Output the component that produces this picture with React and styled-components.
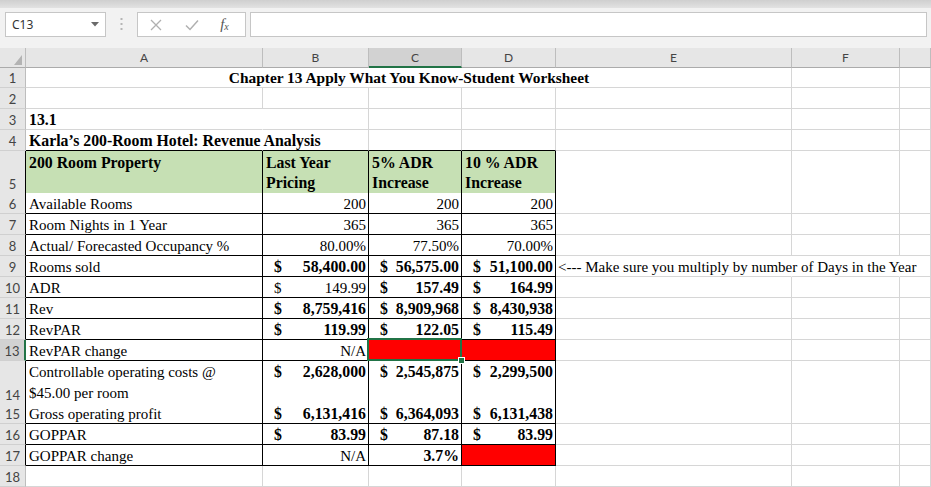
import React from "react";
import styled, { createGlobalStyle } from "styled-components";

const COLS = "26px 237px 106px 93px 94px 236px 108px 1fr";
const GRID = "#d6d6d6";
const GREEN = "#217346";
const HEAD_BG = "#e6e6e6";

const GlobalStyle = createGlobalStyle`
  html, body { margin: 0; padding: 0; background: #fff; overflow: hidden; }
  * { box-sizing: border-box; }
`;

const Window = styled.div`
  width: 931px;
  height: 487px;
  overflow: hidden;
  display: flex;
  flex-direction: column;
  font-family: "Liberation Serif", "Times New Roman", serif;
`;

const TopStrip = styled.div`
  height: 8px;
  background: linear-gradient(#cfcfcf, #e2e2e2);
`;

/* formula bar: name box, dots, x / check / fx, input */
const FormulaBar = styled.div`
  height: 40px;
  background: #f2f2f2;
  display: flex;
  align-items: flex-start;
  padding: 4px 4px 0 5px;
`;

const NameBox = styled.div`
  width: 101px;
  height: 25px;
  background: #fff;
  border: 1px solid #c6c6c6;
  display: flex;
  align-items: center;
  justify-content: space-between;
  padding: 0 6px 0 6px;
  font-family: "Noto Sans", "Open Sans", sans-serif;
  font-size: 12px;
  color: #333;
`;

const Dots = styled.div`
  width: 31px;
  height: 25px;
  display: flex;
  align-items: center;
  justify-content: center;
`;

const FxBox = styled.div`
  width: 109px;
  height: 25px;
  background: #fff;
  border: 1px solid #c6c6c6;
  display: grid;
  grid-template-columns: 36px 36px 1fr;
  align-items: center;
  justify-items: center;
  margin-right: 4px;
`;

const Fx = styled.span`
  font-family: "Liberation Serif", serif;
  font-style: italic;
  font-size: 15px;
  color: #555;
  margin-left: -6px;
  sub { font-size: 10px; vertical-align: -1px; }
`;

const Input = styled.div`
  flex: 1;
  height: 25px;
  background: #fff;
  border: 1px solid #c6c6c6;
`;

/* sheet */
const Row = styled.div`
  display: grid;
  grid-template-columns: ${COLS};
  height: ${({ $h }) => $h || 21}px;
`;

const Corner = styled.div`
  background: ${HEAD_BG};
  border-right: 1px solid #bdbdbd;
  border-bottom: 1px solid #ababab;
  display: flex;
  align-items: flex-end;
  justify-content: flex-end;
  padding: 0 3px 2px 0;
`;

const ColHead = styled.div`
  background: ${({ $sel }) => ($sel ? "#d2d2d2" : HEAD_BG)};
  border-right: 1px solid #bdbdbd;
  border-bottom: ${({ $sel }) => ($sel ? `2px solid ${GREEN}` : "1px solid #ababab")};
  display: flex;
  align-items: center;
  justify-content: center;
  font-family: "Lato", "Liberation Sans", sans-serif;
  font-size: 12px;
  color: #444;
`;

const RowHead = styled.div`
  background: ${({ $sel }) => ($sel ? "#d2d2d2" : HEAD_BG)};
  border-right: ${({ $sel, $edge }) =>
    $sel ? `2px solid ${GREEN}` : `1px solid ${$edge ? "#000" : "#bdbdbd"}`};
  border-bottom: 1px solid #d0d0d0;
  display: flex;
  align-items: flex-end;
  justify-content: center;
  font-family: "Lato", "Liberation Sans", sans-serif;
  font-size: 13px;
  line-height: 17px;
  color: #444;
`;

const Cell = styled.div`
  position: relative;
  grid-column: span ${({ $span }) => $span || 1};
  display: flex;
  align-items: ${({ $top }) => ($top ? "flex-start" : "flex-end")};
  justify-content: ${({ $justify }) => $justify || "flex-start"};
  padding: ${({ $pad }) => $pad || "0 2px 0 3px"};
  padding-top: ${({ $top }) => ($top ? "2px" : "0")};
  background: ${({ $bg }) => $bg || "#fff"};
  border-right: 1px solid ${({ $r }) => $r || GRID};
  border-bottom: 1px solid ${({ $b }) => $b || GRID};
  font-size: ${({ $bold }) => ($bold ? "15.8px" : "15px")};
  line-height: 18px;
  font-weight: ${({ $bold }) => ($bold ? 700 : 400)};
  white-space: nowrap;
  color: #000;
  z-index: ${({ $z }) => $z || "auto"};
`;

const Title = styled.span`
  font-size: 15.4px;
  font-weight: 700;
`;

const Selection = styled.div`
  position: absolute;
  top: -2px;
  left: -2px;
  right: -1px;
  bottom: -1px;
  border: 2px solid ${GREEN};
  pointer-events: none;
`;

const Handle = styled.span`
  position: absolute;
  right: -5px;
  bottom: -5px;
  width: 7px;
  height: 7px;
  background: ${GREEN};
  border: 1px solid #fff;
`;

const Dollar = styled.span``;
const Amount = styled.span``;

const Wrapped = styled.span`
  white-space: normal;
  line-height: ${({ $lh }) => $lh || 20}px;
  margin-top: ${({ $mt }) => $mt || 0}px;
`;

const n = (v, bold) => ({ v, bold });
const c = (v, bold) => ({ v, bold, cur: true });
const RED = { red: true };

const body = [
  { n: 6, label: "Available Rooms", vals: [n("200"), n("200"), n("200")] },
  { n: 7, label: "Room Nights in 1 Year", vals: [n("365"), n("365"), n("365")] },
  { n: 8, label: "Actual/ Forecasted Occupancy %", vals: [n("80.00%"), n("77.50%"), n("70.00%")] },
  {
    n: 9,
    label: "Rooms sold",
    vals: [c("58,400.00", 1), c("56,575.00", 1), c("51,100.00", 1)],
    note: "<--- Make sure you multiply by number of Days in the Year",
  },
  { n: 10, label: "ADR", vals: [c("149.99"), c("157.49", 1), c("164.99", 1)] },
  { n: 11, label: "Rev", vals: [c("8,759,416", 1), c("8,909,968", 1), c("8,430,938", 1)] },
  { n: 12, label: "RevPAR", vals: [c("119.99", 1), c("122.05", 1), c("115.49", 1)] },
  { n: 13, label: "RevPAR change", vals: [n("N/A"), { red: true, sel: true }, RED], sel: true },
  {
    n: 14,
    h: 42,
    top: true,
    label: (
      <Wrapped $lh={21} $mt={-1}>
        Controllable operating costs @<br />$45.00 per room
      </Wrapped>
    ),
    vals: [c("2,628,000", 1), c("2,545,875", 1), c("2,299,500", 1)],
  },
  { n: 15, label: "Gross operating profit", vals: [c("6,131,416", 1), c("6,364,093", 1), c("6,131,438", 1)] },
  { n: 16, label: "GOPPAR", vals: [c("83.99", 1), c("87.18", 1), c("83.99", 1)] },
  { n: 17, label: "GOPPAR change", vals: [n("N/A"), n("3.7%", 1), RED] },
];

function ValueCell({ d, top }) {
  if (d.red) {
    return (
      <Cell $r="#000" $b="#000" $bg="#ff0000" $z={d.sel ? 2 : "auto"}>
        {d.sel && (
          <Selection>
            <Handle />
          </Selection>
        )}
      </Cell>
    );
  }
  if (d.cur) {
    return (
      <Cell $r="#000" $b="#000" $bold={d.bold} $top={top} $justify="space-between" $pad="0 2px 0 11px">
        <Dollar>$</Dollar>
        <Amount>{d.v}</Amount>
      </Cell>
    );
  }
  return (
    <Cell $r="#000" $b="#000" $bold={d.bold} $top={top} $justify="flex-end">
      {d.v}
    </Cell>
  );
}

function Triangle() {
  return (
    <svg width="8" height="10" viewBox="0 0 8 10">
      <polygon points="8,0 8,10 0,10" fill="#b3b3b3" />
    </svg>
  );
}

export default function App() {
  return (
    <Window>
      <GlobalStyle />
      <TopStrip />
      <FormulaBar>
        <NameBox>
          <span>C13</span>
          <svg width="8" height="5" viewBox="0 0 8 5">
            <polygon points="0,0 8,0 4,4.5" fill="#6a6a6a" />
          </svg>
        </NameBox>
        <Dots>
          <svg width="3" height="13" viewBox="0 0 3 13">
            <rect x="0.5" y="0" width="2" height="2" fill="#b5b5b5" />
            <rect x="0.5" y="5" width="2" height="2" fill="#b5b5b5" />
            <rect x="0.5" y="10" width="2" height="2" fill="#b5b5b5" />
          </svg>
        </Dots>
        <FxBox>
          <svg width="12" height="12" viewBox="0 0 12 12">
            <path d="M1 1 L11 11 M11 1 L1 11" stroke="#b0b0b0" strokeWidth="1.3" fill="none" />
          </svg>
          <svg width="14" height="12" viewBox="0 0 14 12">
            <path d="M1 6.5 L5 10.5 L13 1.5" stroke="#b0b0b0" strokeWidth="1.5" fill="none" />
          </svg>
          <Fx>
            f<sub>x</sub>
          </Fx>
        </FxBox>
        <Input />
      </FormulaBar>

      <Row $h={20}>
        <Corner>
          <Triangle />
        </Corner>
        <ColHead>A</ColHead>
        <ColHead>B</ColHead>
        <ColHead $sel>C</ColHead>
        <ColHead>D</ColHead>
        <ColHead>E</ColHead>
        <ColHead>F</ColHead>
        <ColHead />
      </Row>

      <Row $h={20}>
        <RowHead>1</RowHead>
        <Cell $span={5} $justify="center">
          <Title>Chapter 13 Apply What You Know-Student Worksheet</Title>
        </Cell>
        <Cell />
        <Cell />
      </Row>

      <Row>
        <RowHead>2</RowHead>
        <Cell />
        <Cell />
        <Cell />
        <Cell />
        <Cell />
        <Cell />
        <Cell />
      </Row>

      <Row>
        <RowHead>3</RowHead>
        <Cell $bold $r="#fff">
          13.1
        </Cell>
        <Cell />
        <Cell />
        <Cell />
        <Cell />
        <Cell />
        <Cell />
      </Row>

      <Row>
        <RowHead>4</RowHead>
        <Cell $bold $r="#fff" $b="#000" $z={1}>
          Karla’s 200-Room Hotel: Revenue Analysis
        </Cell>
        <Cell $b="#000" />
        <Cell $b="#000" />
        <Cell $b="#000" />
        <Cell />
        <Cell />
        <Cell />
      </Row>

      <Row $h={42}>
        <RowHead $edge>5</RowHead>
        <Cell $bold $top $bg="#c6e0b4" $r="#000" $b="#000">
          <Wrapped>200 Room Property</Wrapped>
        </Cell>
        <Cell $bold $top $bg="#c6e0b4" $r="#000" $b="#000">
          <Wrapped>
            Last Year
            <br />
            Pricing
          </Wrapped>
        </Cell>
        <Cell $bold $top $bg="#c6e0b4" $r="#000" $b="#000">
          <Wrapped>
            5% ADR
            <br />
            Increase
          </Wrapped>
        </Cell>
        <Cell $bold $top $bg="#c6e0b4" $r="#000" $b="#000">
          <Wrapped>
            10 % ADR
            <br />
            Increase
          </Wrapped>
        </Cell>
        <Cell />
        <Cell />
        <Cell />
      </Row>

      {body.map((row) => (
        <Row key={row.n} $h={row.h}>
          <RowHead $edge $sel={row.sel}>
            {row.n}
          </RowHead>
          <Cell $r="#000" $b="#000" $top={row.top}>
            {row.label}
          </Cell>
          {row.vals.map((d, i) => (
            <ValueCell key={i} d={d} top={row.top} />
          ))}
          {row.note ? (
            <>
              <Cell $r="#fff" $pad="0 2px 0 2px" $z={1}>
                {row.note}
              </Cell>
              <Cell $r="#fff" />
              <Cell />
            </>
          ) : (
            <>
              <Cell />
              <Cell />
              <Cell />
            </>
          )}
        </Row>
      ))}

      <Row>
        <RowHead>18</RowHead>
        <Cell />
        <Cell />
        <Cell />
        <Cell />
        <Cell />
        <Cell />
        <Cell />
      </Row>
    </Window>
  );
}
